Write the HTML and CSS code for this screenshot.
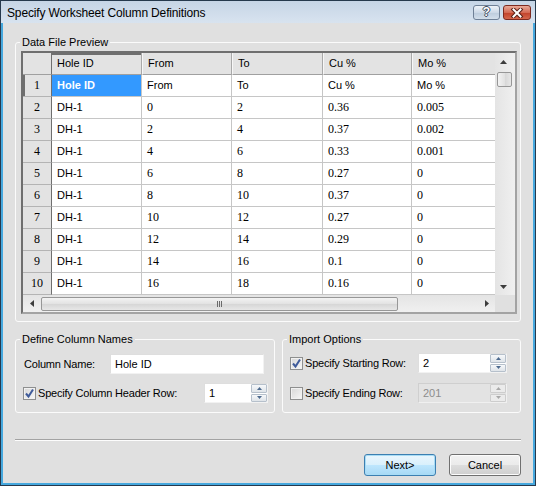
FILE: index.html
```html
<!DOCTYPE html>
<html lang="en">
<head>
    <meta charset="UTF-8">
    <title>Specify Worksheet Column Definitions</title>
    <link rel="stylesheet" href="styles.css">
</head>
<body>
<div class="window">
    <div class="titlebar">
        <span class="title">Specify Worksheet Column Definitions</span>
        <div class="caption">
            <span class="cap help">?</span>
            <span class="cap close">
                <svg width="14" height="10" viewBox="0 0 14 10">
                    <path d="M3.5 1.5 L10.5 8.5 M10.5 1.5 L3.5 8.5" stroke="#5a2018" stroke-width="4" stroke-linecap="square"/>
                    <path d="M3.5 1.5 L10.5 8.5 M10.5 1.5 L3.5 8.5" stroke="#fff" stroke-width="2" stroke-linecap="square"/>
                </svg>
            </span>
        </div>
    </div>

    <div class="client">
        <fieldset class="group preview">
            <legend>Data File Preview</legend>
            <div class="grid">
                <div class="grid-top">
                    <div class="view">
                        <table class="sheet">
                            <colgroup>
                                <col class="c-rh"><col class="c-90"><col class="c-90"><col class="c-91"><col class="c-89"><col class="c-90">
                            </colgroup>
                            <thead>
                                <tr><th class="corner-cell"></th><th class="sel-col">Hole ID</th><th>From</th><th>To</th><th>Cu %</th><th>Mo %</th></tr>
                            </thead>
                            <tbody>
                                <tr><th class="sel-row">1</th><td class="sel">Hole ID</td><td>From</td><td>To</td><td>Cu %</td><td>Mo %</td></tr>
                                <tr><th>2</th><td>DH-1</td><td>0</td><td>2</td><td>0.36</td><td>0.005</td></tr>
                                <tr><th>3</th><td>DH-1</td><td>2</td><td>4</td><td>0.37</td><td>0.002</td></tr>
                                <tr><th>4</th><td>DH-1</td><td>4</td><td>6</td><td>0.33</td><td>0.001</td></tr>
                                <tr><th>5</th><td>DH-1</td><td>6</td><td>8</td><td>0.27</td><td>0</td></tr>
                                <tr><th>6</th><td>DH-1</td><td>8</td><td>10</td><td>0.37</td><td>0</td></tr>
                                <tr><th>7</th><td>DH-1</td><td>10</td><td>12</td><td>0.27</td><td>0</td></tr>
                                <tr><th>8</th><td>DH-1</td><td>12</td><td>14</td><td>0.29</td><td>0</td></tr>
                                <tr><th>9</th><td>DH-1</td><td>14</td><td>16</td><td>0.1</td><td>0</td></tr>
                                <tr><th>10</th><td>DH-1</td><td>16</td><td>18</td><td>0.16</td><td>0</td></tr>
                            </tbody>
                        </table>
                    </div>
                    <div class="vscroll">
                        <span class="sb-arrow"><svg width="7" height="4" viewBox="0 0 7 4"><path d="M0 4 L3.5 0 L7 4Z" fill="#3c3c3c"/></svg></span>
                        <span class="vthumb"></span>
                        <span class="sb-arrow bottom"><svg width="7" height="4" viewBox="0 0 7 4"><path d="M0 0 L3.5 4 L7 0Z" fill="#3c3c3c"/></svg></span>
                    </div>
                </div>
                <div class="grid-bottom">
                    <div class="hscroll">
                        <span class="sb-arrow"><svg width="4" height="7" viewBox="0 0 4 7"><path d="M4 0 L0 3.5 L4 7Z" fill="#3c3c3c"/></svg></span>
                        <span class="hthumb"><span class="grip"></span></span>
                        <span class="sb-arrow right"><svg width="4" height="7" viewBox="0 0 4 7"><path d="M0 0 L4 3.5 L0 7Z" fill="#3c3c3c"/></svg></span>
                    </div>
                    <div class="sb-corner"></div>
                </div>
            </div>
        </fieldset>

        <div class="options">
            <fieldset class="group names">
                <legend>Define Column Names</legend>
                <div class="row">
                    <label class="lbl name-lbl" for="colname">Column Name:</label>
                    <input class="textbox" id="colname" type="text" value="Hole ID">
                </div>
                <div class="row">
                    <span class="check on"><svg width="11" height="11" viewBox="0 0 11 11"><path d="M2 5.5 L4.5 8.5 L9 1.5" fill="none" stroke="#3f5b9a" stroke-width="2"/></svg></span>
                    <span class="lbl">Specify Column Header Row:</span>
                    <div class="spin hdr-spin">
                        <span class="val">1</span>
                        <span class="spin-btns">
                            <span><svg width="5" height="3" viewBox="0 0 5 3"><path d="M0 3 L2.5 0 L5 3Z" fill="#4d6a8e"/></svg></span>
                            <span><svg width="5" height="3" viewBox="0 0 5 3"><path d="M0 0 L2.5 3 L5 0Z" fill="#4d6a8e"/></svg></span>
                        </span>
                    </div>
                </div>
            </fieldset>

            <fieldset class="group import">
                <legend>Import Options</legend>
                <div class="row">
                    <span class="check on"><svg width="11" height="11" viewBox="0 0 11 11"><path d="M2 5.5 L4.5 8.5 L9 1.5" fill="none" stroke="#3f5b9a" stroke-width="2"/></svg></span>
                    <span class="lbl">Specify Starting Row:</span>
                    <div class="spin imp-spin">
                        <span class="val">2</span>
                        <span class="spin-btns">
                            <span><svg width="5" height="3" viewBox="0 0 5 3"><path d="M0 3 L2.5 0 L5 3Z" fill="#4d6a8e"/></svg></span>
                            <span><svg width="5" height="3" viewBox="0 0 5 3"><path d="M0 0 L2.5 3 L5 0Z" fill="#4d6a8e"/></svg></span>
                        </span>
                    </div>
                </div>
                <div class="row">
                    <span class="check"></span>
                    <span class="lbl">Specify Ending Row:</span>
                    <div class="spin imp-spin disabled">
                        <span class="val">201</span>
                        <span class="spin-btns">
                            <span><svg width="5" height="3" viewBox="0 0 5 3"><path d="M0 3 L2.5 0 L5 3Z" fill="#a8a8a8"/></svg></span>
                            <span><svg width="5" height="3" viewBox="0 0 5 3"><path d="M0 0 L2.5 3 L5 0Z" fill="#a8a8a8"/></svg></span>
                        </span>
                    </div>
                </div>
            </fieldset>
        </div>

        <hr class="sep">

        <div class="buttons">
            <button class="btn default">Next&gt;</button>
            <button class="btn">Cancel</button>
        </div>
    </div>
</div>
</body>
</html>
```

FILE: styles.css
```css
* {
    box-sizing: border-box;
}

body {
    margin: 0;
    background: #fff;
    font-family: "Liberation Sans", Arial, sans-serif;
    font-size: 11px;
    color: #000;
}

/* window frame */
.window {
    width: 536px;
    height: 486px;
    border: 1px solid #26394d;
    padding: 0 2px 2px;
    background: #46a8de;
    display: flex;
    flex-direction: column;
}

.titlebar {
    height: 22px;
    margin: 0 -2px;
    padding: 0 4px 0 6px;
    display: flex;
    align-items: center;
    background: linear-gradient(#c6d5e6, #d8e3ef);
}

.title {
    flex: 1;
    font-size: 12px;
    letter-spacing: -0.15px;
    padding-top: 2px;
}

.caption {
    display: flex;
    gap: 3px;
    padding-top: 1px;
}

.cap {
    height: 15px;
    border-radius: 3px;
    display: flex;
    align-items: center;
    justify-content: center;
}

.cap.help {
    width: 27px;
    border: 1px solid #6f8096;
    background: linear-gradient(#eef3f9, #cdd9e7 50%, #bccbdc 51%, #d3dfeb);
    color: #fff;
    font-weight: bold;
    font-size: 12px;
    line-height: 13px;
    text-shadow: 1px 0 #3b4a5c, -1px 0 #3b4a5c, 0 1px #3b4a5c, 0 -1px #3b4a5c;
}

.cap.close {
    width: 28px;
    border: 1px solid #7d2a20;
    background: linear-gradient(#e9a998, #d46a55 50%, #c0412a 51%, #d5664c);
}

.client {
    flex: 1;
    background: #e0e0e0;
    padding: 12px 12px 0;
    display: flex;
    flex-direction: column;
}

/* group boxes */
.group {
    margin: 0;
    border: 1px solid #fbfbfb;
    border-radius: 3px;
    min-width: 0;
}

.group legend {
    padding: 0 2px;
    line-height: 14px;
}

.preview {
    padding: 2px 3px 7px 5px;
}

.preview legend {
    margin-left: -1px;
}

/* data grid */
.grid {
    height: 263px;
    border: 2px solid;
    border-color: #6f6f6f #a3a3a3 #a3a3a3 #6f6f6f;
    background: #fff;
    display: flex;
    flex-direction: column;
}

.grid-top {
    height: 242px;
    display: flex;
}

.view {
    width: 472px;
    overflow: hidden;
}

.sheet {
    border-collapse: separate;
    border-spacing: 0;
    table-layout: fixed;
    width: 479px;
}

.c-rh { width: 29px; }
.c-90 { width: 90px; }
.c-91 { width: 91px; }
.c-89 { width: 89px; }

.sheet th,
.sheet td {
    height: 22px;
    padding: 0 0 0 5px;
    border-right: 1px solid #c6c6c6;
    border-bottom: 1px solid #c6c6c6;
    text-align: left;
    font-weight: normal;
    white-space: nowrap;
    overflow: hidden;
    line-height: 21px;
}

.sheet thead th {
    background: #e3e3e3;
    border-left: 1px solid #f7f7f7;
    border-right-color: #a9a9a9;
    border-bottom-color: #a0a0a0;
}

.sheet thead th.corner-cell {
    border-left: 0;
    border-right-color: #6f6f6f;
}

.sheet thead th.sel-col {
    border-left: 0;
    border-top: 0;
    box-shadow: inset 0 2px #6f6f6f;
}

.sheet tbody th {
    padding: 0;
    background: #e3e3e3;
    text-align: center;
    font-family: "Liberation Serif", "Times New Roman", serif;
    font-size: 12px;
    border-right-color: #6f6f6f;
    border-bottom-color: #b4b4b4;
}

.sheet tbody th.sel-row {
    box-shadow: inset 2px 0 #6f6f6f;
}

.sheet tbody tr:nth-child(n+2) td:nth-child(n+3) {
    font-family: "Liberation Serif", "Times New Roman", serif;
    font-size: 12px;
}

.sheet td.sel {
    background: #3399ff;
    color: #fff;
    font-weight: bold;
}

/* scroll bars */
.vscroll {
    flex: 1;
    display: flex;
    flex-direction: column;
    background: linear-gradient(90deg, #e4e4e4, #f0f0f0);
}

.sb-arrow {
    width: 17px;
    height: 17px;
    display: flex;
    align-items: center;
    justify-content: center;
    flex-shrink: 0;
}

.sb-arrow.bottom {
    margin-top: auto;
}

.vthumb {
    width: 15px;
    height: 15px;
    margin: 2px 0 0 2px;
    border: 1px solid #979797;
    border-radius: 2px;
    background: linear-gradient(90deg, #f3f3f3, #e2e2e2 50%, #d6d6d6 51%, #e7e7e7);
}

.grid-bottom {
    height: 17px;
    display: flex;
}

.hscroll {
    width: 472px;
    display: flex;
    align-items: center;
    background: linear-gradient(#e4e4e4, #f0f0f0);
}

.hscroll .sb-arrow.right {
    margin-left: auto;
}

.hthumb {
    width: 357px;
    height: 14px;
    margin-left: 1px;
    border: 1px solid #979797;
    border-radius: 2px;
    background: linear-gradient(#f3f3f3, #e2e2e2 50%, #d6d6d6 51%, #e7e7e7);
    display: flex;
    align-items: center;
    justify-content: center;
}

.grip {
    width: 5px;
    height: 6px;
    background: repeating-linear-gradient(90deg, #6b6b6b 0 1px, transparent 1px 2px);
}

.sb-corner {
    flex: 1;
    background: #e0e0e0;
}

/* option groups */
.options {
    margin-top: 10px;
    display: flex;
    gap: 7px;
}

.names {
    width: 260px;
    padding: 8px 0 9px 7px;
}

.import {
    flex: 1;
    padding: 7px 0 9px 7px;
}

.names legend,
.import legend {
    margin-left: -3px;
}

.row {
    height: 20px;
    display: flex;
    align-items: center;
}

.names .row + .row {
    margin-top: 9px;
}

.import .row + .row {
    margin-top: 10px;
}

.lbl {
    letter-spacing: -0.2px;
}

.check + .lbl {
    margin-left: 2px;
}

.name-lbl {
    width: 87px;
    padding-left: 1px;
}

.textbox {
    width: 154px;
    height: 20px;
    margin: 0 9px 0 0;
    padding: 0 4px;
    border: 1px solid;
    border-color: #dedede #f2f2f2 #f2f2f2 #dedede;
    background: #fff;
    font-family: inherit;
    font-size: 11px;
    color: #000;
    outline: none;
}

.check {
    width: 13px;
    height: 13px;
    flex-shrink: 0;
    border: 1px solid #8e8f8f;
    background: linear-gradient(135deg, #d7d7d7, #f7f7f7);
    box-shadow: inset 0 0 0 1px #f1f1f1;
    display: flex;
    align-items: center;
    justify-content: center;
}

.spin {
    height: 20px;
    margin-left: auto;
    display: flex;
    border: 1px solid;
    border-color: #dedede #f2f2f2 #f2f2f2 #dedede;
    background: #fff;
}

.hdr-spin {
    width: 64px;
    margin-right: 6px;
}

.imp-spin {
    width: 89px;
    margin-right: 13px;
}

.spin .val {
    flex: 1;
    padding-left: 4px;
    line-height: 18px;
}

.spin-btns {
    width: 17px;
    display: flex;
    flex-direction: column;
    gap: 1px;
    padding: 0 0 0 1px;
}

.spin-btns span {
    flex: 1;
    border: 1px solid #b6c0cb;
    border-radius: 1px;
    background: linear-gradient(#f6f8fa, #dfe4e9);
    display: flex;
    align-items: center;
    justify-content: center;
}

.spin.disabled {
    background: #e3e3e3;
    border-color: #cfcfcf #f0f0f0 #f0f0f0 #cfcfcf;
    color: #8d8d8d;
}

.spin.disabled .spin-btns span {
    border-color: #cdcdcd;
    background: #ebebeb;
}

/* bottom */
.sep {
    margin: 26px 0 0;
    height: 2px;
    border: 0;
    border-top: 1px solid #a3a3a3;
    border-bottom: 1px solid #fdfdfd;
}

.buttons {
    margin-top: 13px;
    display: flex;
    justify-content: flex-end;
    gap: 13px;
}

.btn {
    width: 72px;
    height: 22px;
    padding: 0;
    border: 1px solid #707070;
    border-radius: 3px;
    background: linear-gradient(#f2f2f2, #ebebeb 50%, #dddddd 51%, #cfcfcf);
    box-shadow: inset 0 0 0 1px #fcfcfc;
    font-family: "Liberation Sans", Arial, sans-serif;
    font-size: 11px;
    color: #000;
}

.btn.default {
    border-color: #3c7fb1;
    background: linear-gradient(#eaf6fd, #d9f0fc 50%, #bee6fd 51%, #a7d9f5);
    box-shadow: inset 0 0 0 1px #a8dcf5;
}
```
